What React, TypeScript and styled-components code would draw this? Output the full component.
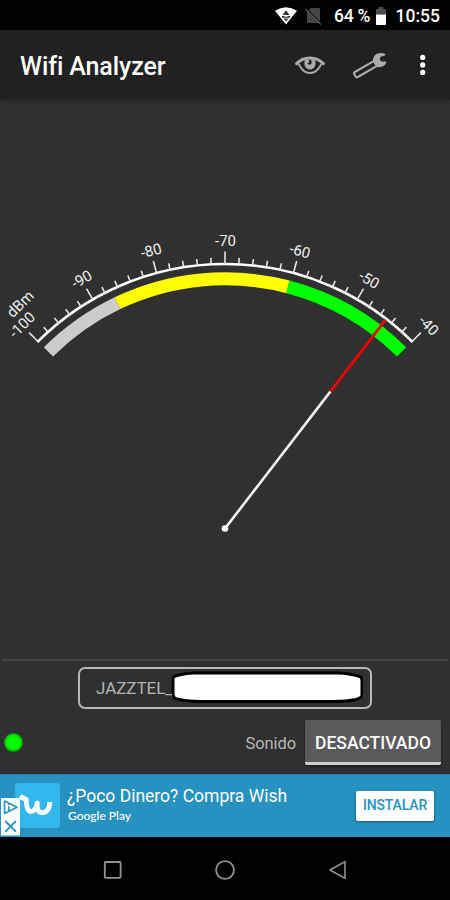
import React from 'react';
import styled, { createGlobalStyle } from 'styled-components';

const GlobalStyle = createGlobalStyle`
  * { box-sizing: border-box; }
  body { margin: 0; background: #303030; font-family: Roboto, "Noto Sans", sans-serif; }
  svg { display: block; flex: none; }
`;

const Screen = styled.div`
  width: 450px;
  height: 900px;
  display: flex;
  flex-direction: column;
  overflow: hidden;
  background: #303030;
  color: #fff;
`;

const StatusBar = styled.header`
  height: 30px;
  flex: none;
  display: flex;
  align-items: center;
  justify-content: flex-end;
  padding: 1px 10px 0 0;
  background: #000;
  font-weight: 500;
  line-height: 28px;
  white-space: nowrap;
`;

const StatusText = styled.span<{ $width: number; $spacing?: number }>`
  width: ${p => p.$width}px;
  padding-top: 1px;
  font-size: 17.5px;
  letter-spacing: ${p => p.$spacing ?? 0}px;
  text-align: right;
`;

const StatusIcon = styled.span<{ $gap: number }>`
  margin-right: ${p => p.$gap}px;
`;

const AppBar = styled.div`
  height: 70px;
  flex: none;
  display: flex;
  align-items: center;
  padding: 0 5px 0 20px;
  background: #212121;
  box-shadow: 0 1px 5px rgba(0, 0, 0, 0.3);
`;

const Title = styled.h1`
  flex: 1;
  margin: 4px 0 0;
  font-size: 25px;
  font-weight: 500;
  line-height: 30px;
  letter-spacing: -0.1px;
`;

const Actions = styled.div`
  display: flex;
  align-items: center;
`;

const IconButton = styled.button<{ $width: number }>`
  width: ${p => p.$width}px;
  height: 40px;
  padding: 0;
  border: 0;
  background: none;
  display: flex;
  align-items: center;
  justify-content: center;
`;

const GaugeArea = styled.main`
  height: 559px;
  flex: none;
`;

const GaugeLabel = styled.text`
  font-size: 15px;
  fill: #eee;
`;

const Footer = styled.section`
  height: 115px;
  flex: none;
  display: flex;
  flex-direction: column;
  margin: 0 2px;
  border-top: 2px solid #454545;
`;

const NetworkBox = styled.div`
  width: 294.5px;
  height: 42px;
  margin: 6px 0 0 75.5px;
  flex: none;
  display: flex;
  padding: 2px 0 0 16.5px;
  border: 2px solid #b8b8b8;
  border-radius: 7px;
`;

const NetworkName = styled.span`
  width: 75px;
  margin-top: 6px;
  color: #b4b4b4;
  font-size: 17px;
  line-height: 22px;
  letter-spacing: -0.05px;
  white-space: nowrap;
`;

const SoundRow = styled.div`
  display: flex;
  align-items: center;
  height: 45px;
  margin-top: 11px;
  padding: 0 7px 0 2px;
`;

const StatusDot = styled.span`
  width: 19px;
  height: 19px;
  margin-right: auto;
  border-radius: 50%;
  background: radial-gradient(circle, #00ff00 0 40%, #00d800 57%, #168a16 71%);
`;

const SoundLabel = styled.span`
  margin: 1px 9px 0 0;
  color: #b8b8b8;
  font-size: 16.5px;
  letter-spacing: -0.1px;
`;

const ToggleButton = styled.button`
  width: 136px;
  height: 45px;
  padding: 4px 0 0;
  border: 0;
  border-bottom: 3px solid #cfcfcf;
  border-radius: 2px;
  background: #5a595b;
  box-shadow: 0 2px 3px rgba(0, 0, 0, 0.35);
  color: #fff;
  font: 500 17.5px Roboto, sans-serif;
  white-space: nowrap;
`;

const AdBanner = styled.aside`
  height: 63px;
  flex: none;
  display: flex;
  align-items: center;
  background: #2792bf;
  border-top: 1px solid #2480a8;
`;

const AdCopy = styled.div`
  flex: 1;
  margin-left: 7px;
  height: 50px;
  display: flex;
  flex-direction: column;
`;

const AdTitle = styled.span`
  margin-top: 3px;
  font-size: 17.5px;
  line-height: 24px;
  white-space: nowrap;
`;

const AdStore = styled.span`
  margin: 0 0 0 1px;
  font: 500 12px/16px Lato, sans-serif;
`;

const InstallButton = styled.button`
  width: 78px;
  height: 30px;
  margin: 0 16px 0 0;
  padding: 0 0 3px;
  border: 0;
  border-radius: 2px;
  background: #fff;
  box-shadow: 0 1px 3px rgba(0, 0, 0, 0.4);
  color: #2792bf;
  font: 500 14px Roboto, sans-serif;
  letter-spacing: -0.15px;
`;

const NavBar = styled.nav`
  height: 63px;
  flex: none;
  display: flex;
  justify-content: center;
  align-items: center;
  padding-top: 3px;
  background: #000;
`;

const NavButton = styled.button`
  width: 112.5px;
  padding: 0;
  border: 0;
  background: none;
  display: flex;
  justify-content: center;
`;

const CX = 225;
const CY = 428.5;
const SCALE_RADIUS = 264.5;

const point = (radius: number, degrees: number): [number, number] => {
  const a = (degrees * Math.PI) / 180;
  return [CX + radius * Math.sin(a), CY - radius * Math.cos(a)];
};

const arc = (radius: number, from: number, to: number) => {
  const [x1, y1] = point(radius, from);
  const [x2, y2] = point(radius, to);
  return `M${x1} ${y1}A${radius} ${radius} 0 0 1 ${x2} ${y2}`;
};

const angleOf = (dbm: number) => (dbm + 70) * 1.5;

const zones = [
  { from: -45, to: -25.5, color: '#cccccc' },
  { from: -25.5, to: 14.6, color: '#ffff00' },
  { from: 14.6, to: 45, color: '#00ff00' },
];

const ticks = Array.from({ length: 31 }, (_, i) => -100 + i * 2);

function Gauge() {
  const needle = angleOf(-44.95);
  const [mx, my] = point(173, needle);
  const [tx, ty] = point(263.5, needle);
  return (
    <svg width="450" height="559" viewBox="0 0 450 559">
      {zones.map(z => (
        <path key={z.color} d={arc(249.7, z.from, z.to)} fill="none" stroke={z.color} strokeWidth="13" />
      ))}
      <path d={arc(SCALE_RADIUS, -45.2, 45.2)} fill="none" stroke="#fff" strokeWidth="2.6" />
      {ticks.map(dbm => {
        const major = dbm % 10 === 0;
        return (
          <g key={dbm} transform={`rotate(${angleOf(dbm)} ${CX} ${CY})`}>
            <line
              x1={CX}
              x2={CX}
              y1={CY - SCALE_RADIUS}
              y2={CY - SCALE_RADIUS - (major ? 12.5 : 6.5)}
              stroke="#e4e4e4"
              strokeWidth="1.6"
            />
            {major && (
              <GaugeLabel x={CX + 0.5} y={CY - 282.3} textAnchor="middle">{dbm}</GaugeLabel>
            )}
          </g>
        );
      })}
      <GaugeLabel x={CX - 1.5} y={CY - 298.5} transform={`rotate(-45 ${CX} ${CY})`}>dBm</GaugeLabel>
      <line x1={CX} y1={CY} x2={mx} y2={my} stroke="#f2f2f2" strokeWidth="2.6" />
      <line x1={mx} y1={my} x2={tx} y2={ty} stroke="#f00000" strokeWidth="2.8" />
      <circle cx={CX} cy={CY} r="3.3" fill="#fff" />
    </svg>
  );
}

const WifiIcon = () => (
  <svg width="22" height="18" viewBox="0 0 22 18">
    <path d="M0 3.8Q11-3.2 22 3.8L11 17.5Z" fill="#fff" />
    <path d="M11 3.2 14.5 8h-7ZM7 9h8v1.8H7ZM8.5 11.5h5L11 14.5Z" fill="#333" />
    <path d="M9.7 9.5h2.6" stroke="#fff" strokeWidth=".8" />
  </svg>
);

const NoSimIcon = () => (
  <svg width="17" height="18" viewBox="0 0 17 18">
    <path d="M6 1h8q1 0 1 1v14H2V5Z" fill="#454545" />
    <path d="M0 1 16 17" stroke="#000" strokeWidth="2" />
    <path d="M.5 2 16 17.5" stroke="#5a5a5a" strokeWidth="1.3" />
  </svg>
);

const BatteryIcon = () => (
  <svg width="10" height="18" viewBox="0 0 10 18">
    <path d="M2.7 0h4.6v2H9q1 0 1 1v4.5H0V3q0-1 1-1h1.7Z" fill="#4d4d4d" />
    <path d="M0 7.5h10V17q0 1-1 1H1q-1 0-1-1Z" fill="#fff" />
  </svg>
);

const EyeIcon = () => (
  <svg width="30" height="20" viewBox="0 0 30 20" fill="none" stroke="#ababab" strokeLinecap="round">
    <path d="M1.6 8.6Q7 3 15 3T28.4 8.6" strokeWidth="3" />
    <path d="M4 9.5Q8 18 15 18T26 9.5" strokeWidth="1.8" />
    <path d="M10 4.5C8.4 9 10 14.5 15 14.5c5 0 6.8-5.5 4.8-10h-4.5c2 1.7 1.9 4.7-.3 5.2-1.6.2-2.5-.6-2.4-1.7 1.6.3 2.1-1.2 1.2-3.5Z" fill="#ababab" stroke="none" />
  </svg>
);

const WrenchIcon = () => (
  <svg width="36" height="27" viewBox="0 0 36 27">
    <path
      fill="#ababab"
      d="M20.8 9.8C20.8 4.4 24 1.1 28.5 1.1q3.2 0 4.8 1.2.3 1.3-1.5 1.6-3.3 0-3.8 2.4c-.5 2.6 1.3 3.9 5 3.3q1.7 0 1.4 1.2c-1.4 3.4-5.5 5.2-10 4Z"
    />
    <path
      d="M22.1 8.9 2.9 20q-1.4.9-.7 2.1l1.4 2.4q.8 1.3 2.2.5L25 13.8"
      fill="none"
      stroke="#ababab"
      strokeWidth="2.1"
      strokeLinejoin="round"
    />
  </svg>
);

const MoreIcon = () => (
  <svg width="6" height="22" viewBox="0 0 6 22" fill="#fff">
    <circle cx="2.7" cy="3.4" r="2.6" />
    <circle cx="2.7" cy="10.9" r="2.6" />
    <circle cx="2.7" cy="18.4" r="2.6" />
  </svg>
);

const RedactedName = () => (
  <svg width="192" height="34" viewBox="0 0 192 34">
    <path
      d="M2.5 6Q8 3 22 2H168Q183 3 189.5 6 191 7 191 10.5V24.5Q190 27 185 28.5 176 30.5 162 30.5H28Q8 29.5 3.5 27 2 25.5 2 21.5V8.5Q2 6.5 2.5 6Z"
      fill="#fff"
      stroke="#000"
      strokeWidth="3"
    />
  </svg>
);

const WishLogo = () => (
  <svg width="60" height="62" viewBox="0 0 60 62">
    <rect x="15" y="8" width="45" height="45" rx="4" fill="#32b7ef" />
    <path
      d="M20 21.5 26.3 24.5Q26 33 29.5 36.3 35.5 37.5 37.3 28 36.5 36.5 41 37.5C46.5 38.3 49.3 34.5 50 27"
      fill="none"
      stroke="#fff"
      strokeWidth="4.8"
      strokeLinejoin="round"
    />
    <rect x="1" y="23" width="19" height="37.5" fill="#fff" />
    <g fill="none" stroke="#2792bf">
      <path d="M4.5 26V38.5L17 32.2Z" strokeWidth="1.6" strokeLinejoin="round" />
      <path d="M8.8 31.2V36M8.8 28.6v1.4" strokeWidth="1.7" />
      <path d="m5.2 46 10.8 10.8M16 46 5.2 56.8" strokeWidth="1.8" />
    </g>
  </svg>
);

export default function App() {
  return (
    <>
      <GlobalStyle />
      <Screen>
        <StatusBar>
          <StatusIcon $gap={8}><WifiIcon /></StatusIcon>
          <StatusIcon $gap={8}><NoSimIcon /></StatusIcon>
          <StatusText $width={40} $spacing={-0.3}>64 %</StatusText>
          <StatusIcon $gap={6} />
          <StatusIcon $gap={0}><BatteryIcon /></StatusIcon>
          <StatusText $width={54}>10:55</StatusText>
        </StatusBar>
        <AppBar>
          <Title>Wifi Analyzer</Title>
          <Actions>
            <IconButton $width={60} aria-label="Ver"><EyeIcon /></IconButton>
            <IconButton $width={60} aria-label="Ajustes"><WrenchIcon /></IconButton>
            <IconButton $width={45} aria-label="Más"><MoreIcon /></IconButton>
          </Actions>
        </AppBar>
        <GaugeArea><Gauge /></GaugeArea>
        <Footer>
          <NetworkBox>
            <NetworkName>JAZZTEL_</NetworkName>
            <RedactedName />
          </NetworkBox>
          <SoundRow>
            <StatusDot />
            <SoundLabel>Sonido</SoundLabel>
            <ToggleButton>DESACTIVADO</ToggleButton>
          </SoundRow>
        </Footer>
        <AdBanner>
          <WishLogo />
          <AdCopy>
            <AdTitle>¿Poco Dinero? Compra Wish</AdTitle>
            <AdStore>Google Play</AdStore>
          </AdCopy>
          <InstallButton>INSTALAR</InstallButton>
        </AdBanner>
        <NavBar>
          <NavButton aria-label="Recientes">
            <svg width="20" height="20" viewBox="0 0 20 20" fill="none" stroke="#929292" strokeWidth="1.8">
              <rect x="1.8" y="2" width="15.8" height="15.8" rx="1" />
            </svg>
          </NavButton>
          <NavButton aria-label="Inicio">
            <svg width="20" height="20" viewBox="0 0 20 20" fill="none" stroke="#929292" strokeWidth="1.8">
              <circle cx="10" cy="10" r="8.9" />
            </svg>
          </NavButton>
          <NavButton aria-label="Atrás">
            <svg width="20" height="20" viewBox="0 0 20 20" fill="none" stroke="#929292" strokeWidth="1.6" strokeLinejoin="round">
              <path d="M17 1.6V18.4L2 10Z" />
            </svg>
          </NavButton>
        </NavBar>
      </Screen>
    </>
  );
}
